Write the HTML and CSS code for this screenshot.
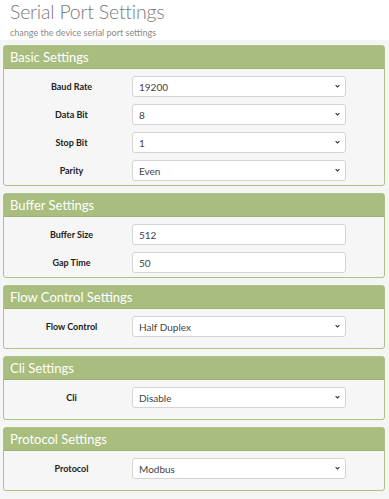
FILE: index.html
```html
<!DOCTYPE html>
<html lang="en">
<head>
  <meta charset="UTF-8">
  <meta name="viewport" content="width=device-width, initial-scale=1.0">
  <title>Serial Port Settings</title>
  <link rel="stylesheet" href="styles.css">
</head>
<body>
  <div class="page-header">
    <h1>Serial Port Settings</h1>
    <p class="subtitle">change the device serial port settings</p>
  </div>
  <div class="content">
    <div class="panel">
      <div class="panel-heading">Basic Settings</div>
      <div class="panel-body">
        <label for="baud">Baud Rate</label>
        <span class="select-wrap">
          <select id="baud" class="field"><option>19200</option></select>
          <svg class="chevron" viewBox="0 0 8 5"><path d="M1 1l3 3 3-3" /></svg>
        </span>
        <label for="databit">Data Bit</label>
        <span class="select-wrap">
          <select id="databit" class="field"><option>8</option></select>
          <svg class="chevron" viewBox="0 0 8 5"><path d="M1 1l3 3 3-3" /></svg>
        </span>
        <label for="stopbit">Stop Bit</label>
        <span class="select-wrap">
          <select id="stopbit" class="field"><option>1</option></select>
          <svg class="chevron" viewBox="0 0 8 5"><path d="M1 1l3 3 3-3" /></svg>
        </span>
        <label for="parity">Parity</label>
        <span class="select-wrap">
          <select id="parity" class="field"><option>Even</option></select>
          <svg class="chevron" viewBox="0 0 8 5"><path d="M1 1l3 3 3-3" /></svg>
        </span>
      </div>
    </div>
    <div class="panel">
      <div class="panel-heading">Buffer Settings</div>
      <div class="panel-body">
        <label for="bufsize">Buffer Size</label>
        <input id="bufsize" class="field" type="text" value="512">
        <label for="gaptime">Gap Time</label>
        <input id="gaptime" class="field" type="text" value="50">
      </div>
    </div>
    <div class="panel">
      <div class="panel-heading">Flow Control Settings</div>
      <div class="panel-body">
        <label for="flow">Flow Control</label>
        <span class="select-wrap">
          <select id="flow" class="field"><option>Half Duplex</option></select>
          <svg class="chevron" viewBox="0 0 8 5"><path d="M1 1l3 3 3-3" /></svg>
        </span>
      </div>
    </div>
    <div class="panel">
      <div class="panel-heading">Cli Settings</div>
      <div class="panel-body">
        <label for="cli">Cli</label>
        <span class="select-wrap">
          <select id="cli" class="field"><option>Disable</option></select>
          <svg class="chevron" viewBox="0 0 8 5"><path d="M1 1l3 3 3-3" /></svg>
        </span>
      </div>
    </div>
    <div class="panel">
      <div class="panel-heading">Protocol Settings</div>
      <div class="panel-body">
        <label for="protocol">Protocol</label>
        <span class="select-wrap">
          <select id="protocol" class="field"><option>Modbus</option></select>
          <svg class="chevron" viewBox="0 0 8 5"><path d="M1 1l3 3 3-3" /></svg>
        </span>
      </div>
    </div>
  </div>
</body>
</html>
```

FILE: styles.css
```css
body {
  font-family: 'Lato', 'Open Sans', sans-serif;
  margin: 0;
  padding: 0;
  background: #f4f5f5;
  color: #333;
}
.page-header {
  background: white;
  height: 40px;
  padding-left: 10px;
}
.page-header h1 {
  margin: 0;
  padding-top: 1px;
  font-size: 19.5px;
  font-weight: 300;
  letter-spacing: -0.2px;
  color: #7a7a7a;
  line-height: 22px;
}
.subtitle {
  margin: 4px 0 0 0;
  font-size: 9px;
  color: #8a8a8a;
  line-height: 11px;
}
.content {
  display: flex;
  flex-direction: column;
  gap: 7px;
  padding: 5px 4px 9px 3px;
}
.panel {
  border: 1px solid #adc286;
  border-radius: 3px;
  background: #f5f6f5;
}
.panel-heading {
  background: #a8bd7e;
  color: white;
  font-size: 13px;
  height: 22px;
  line-height: 22px;
  padding-left: 6px;
  border-bottom: 1px solid #9db270;
}
.panel-body {
  display: grid;
  grid-template-columns: 121px 214px;
  row-gap: 7px;
  align-items: center;
  align-content: start;
  min-height: 39px;
  box-sizing: border-box;
  padding: 7px 0 4px 7px;
}
label {
  font-size: 9px;
  font-weight: bold;
  text-align: center;
  color: #222;
}
.select-wrap {
  position: relative;
  display: block;
}
.field {
  display: block;
  width: 100%;
  height: 21px;
  box-sizing: border-box;
  border: 1px solid #d4d4d4;
  border-radius: 3px;
  background: white;
  font-family: inherit;
  font-size: 10px;
  color: #444;
  padding: 0 6px;
  appearance: none;
  outline: none;
}
.chevron {
  position: absolute;
  right: 6px;
  top: 8px;
  width: 5px;
  height: 4px;
  fill: none;
  stroke: #333;
  stroke-width: 1.8;
}
```
